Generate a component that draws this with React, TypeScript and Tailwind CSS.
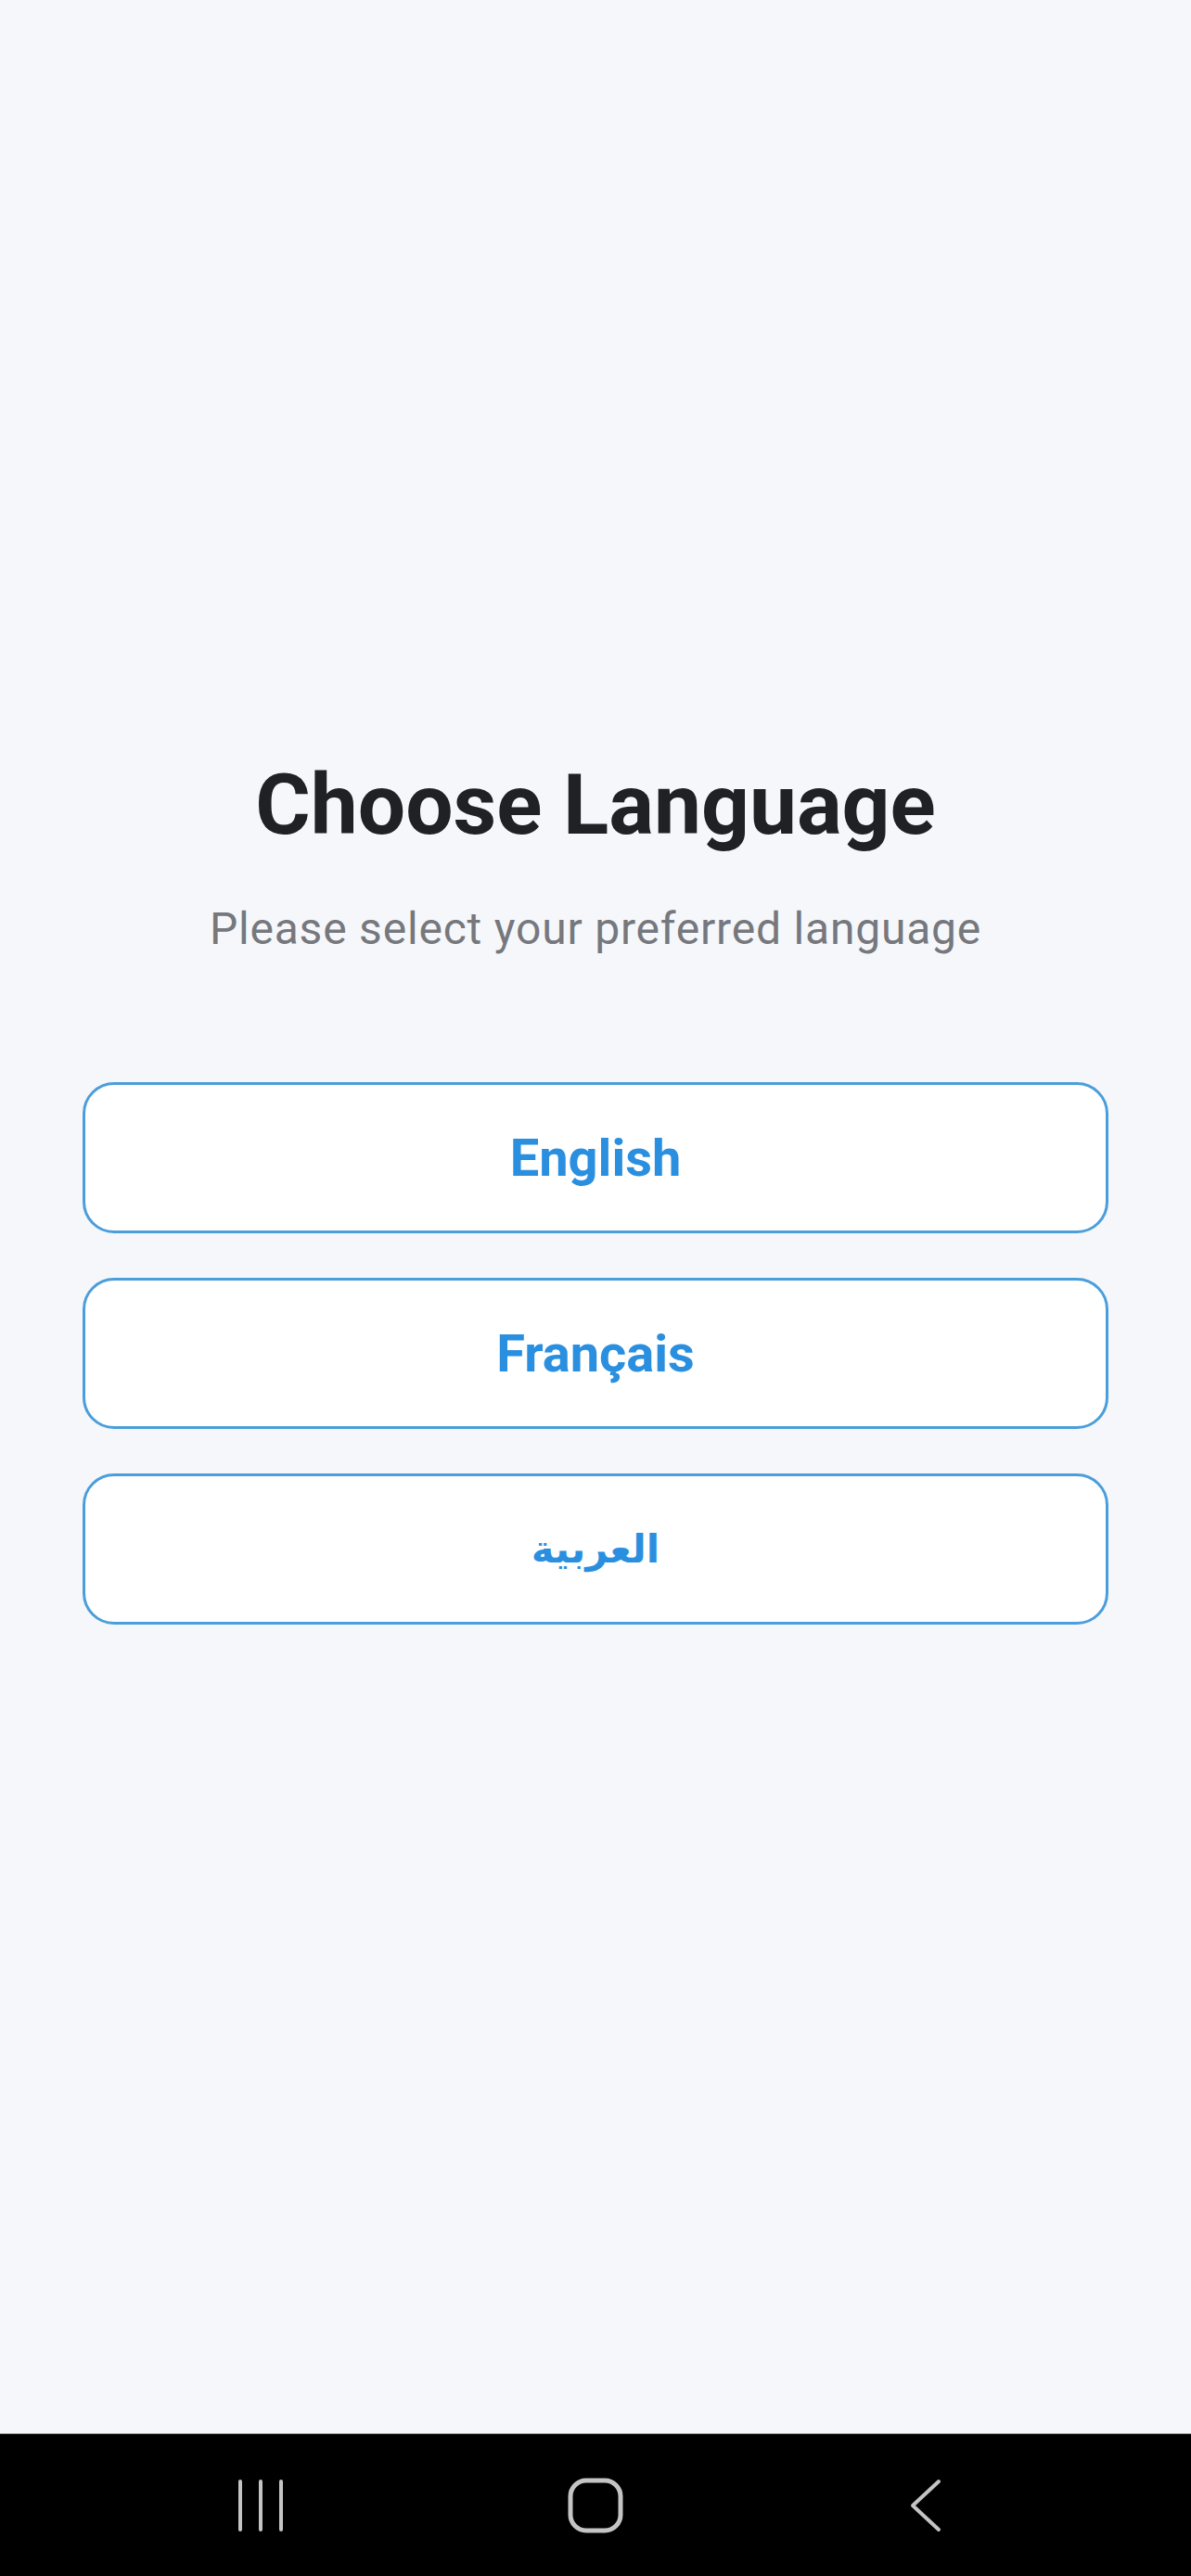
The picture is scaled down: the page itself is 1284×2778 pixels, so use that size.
import { useState } from "react";

const languages = [
  { code: "en", label: "English" },
  { code: "fr", label: "Français" },
  { code: "ar", label: "العربية" },
];

function NavBar() {
  return (
    <div className="h-[154px] bg-black border-t border-[#9a9a9a] flex items-center justify-center gap-[298px]">
      {/* recent apps */}
      <svg width="60" height="60" viewBox="0 0 60 60" fill="none" stroke="#c4c4c4" strokeWidth="4" strokeLinecap="round">
        <path d="M5 4v52M27 4v52M49 4v52" />
      </svg>
      {/* home */}
      <svg width="60" height="64" viewBox="0 0 60 64" fill="none" stroke="#c4c4c4" strokeWidth="5">
        <rect x="3" y="5" width="54" height="54" rx="17" />
      </svg>
      {/* back */}
      <svg width="60" height="60" viewBox="0 0 60 60" fill="none" stroke="#c4c4c4" strokeWidth="4" strokeLinecap="round" strokeLinejoin="round">
        <path d="M42 4L14 30L42 56" />
      </svg>
    </div>
  );
}

export default function App() {
  const [selected, setSelected] = useState<string | null>(null);

  return (
    <div className="w-[1284px] h-[2778px] flex flex-col bg-[#f5f7fb]" style={{ fontFamily: "Roboto, 'Noto Sans', sans-serif" }}>
      <div className="h-[2624px] flex flex-col items-center pt-[813px] px-[89px]">
        <h1 className="text-[91px] leading-[110px] font-bold text-[#202124]">Choose Language</h1>
        <p className="mt-[50px] text-[48px] leading-[57px] tracking-[0.8px] text-[#76787d]">Please select your preferred language</p>

        <div className="mt-[137px] w-full flex flex-col gap-[48px]">
          {languages.map((lang) => (
            <button
              key={lang.code}
              onClick={() => setSelected(lang.code)}
              className={`h-[163px] w-full rounded-[34px] border-[3px] border-[#4a9edb] flex items-center justify-center text-[56px] font-bold text-[#2b8fe0] ${
                selected === lang.code ? "bg-[#eaf4fd]" : "bg-white"
              }`}
              style={lang.code === "ar" ? { fontFamily: "'DejaVu Sans', 'Noto Sans', sans-serif", fontSize: "42px" } : undefined}
            >
              {lang.label}
            </button>
          ))}
        </div>
      </div>
      <NavBar />
    </div>
  );
}
